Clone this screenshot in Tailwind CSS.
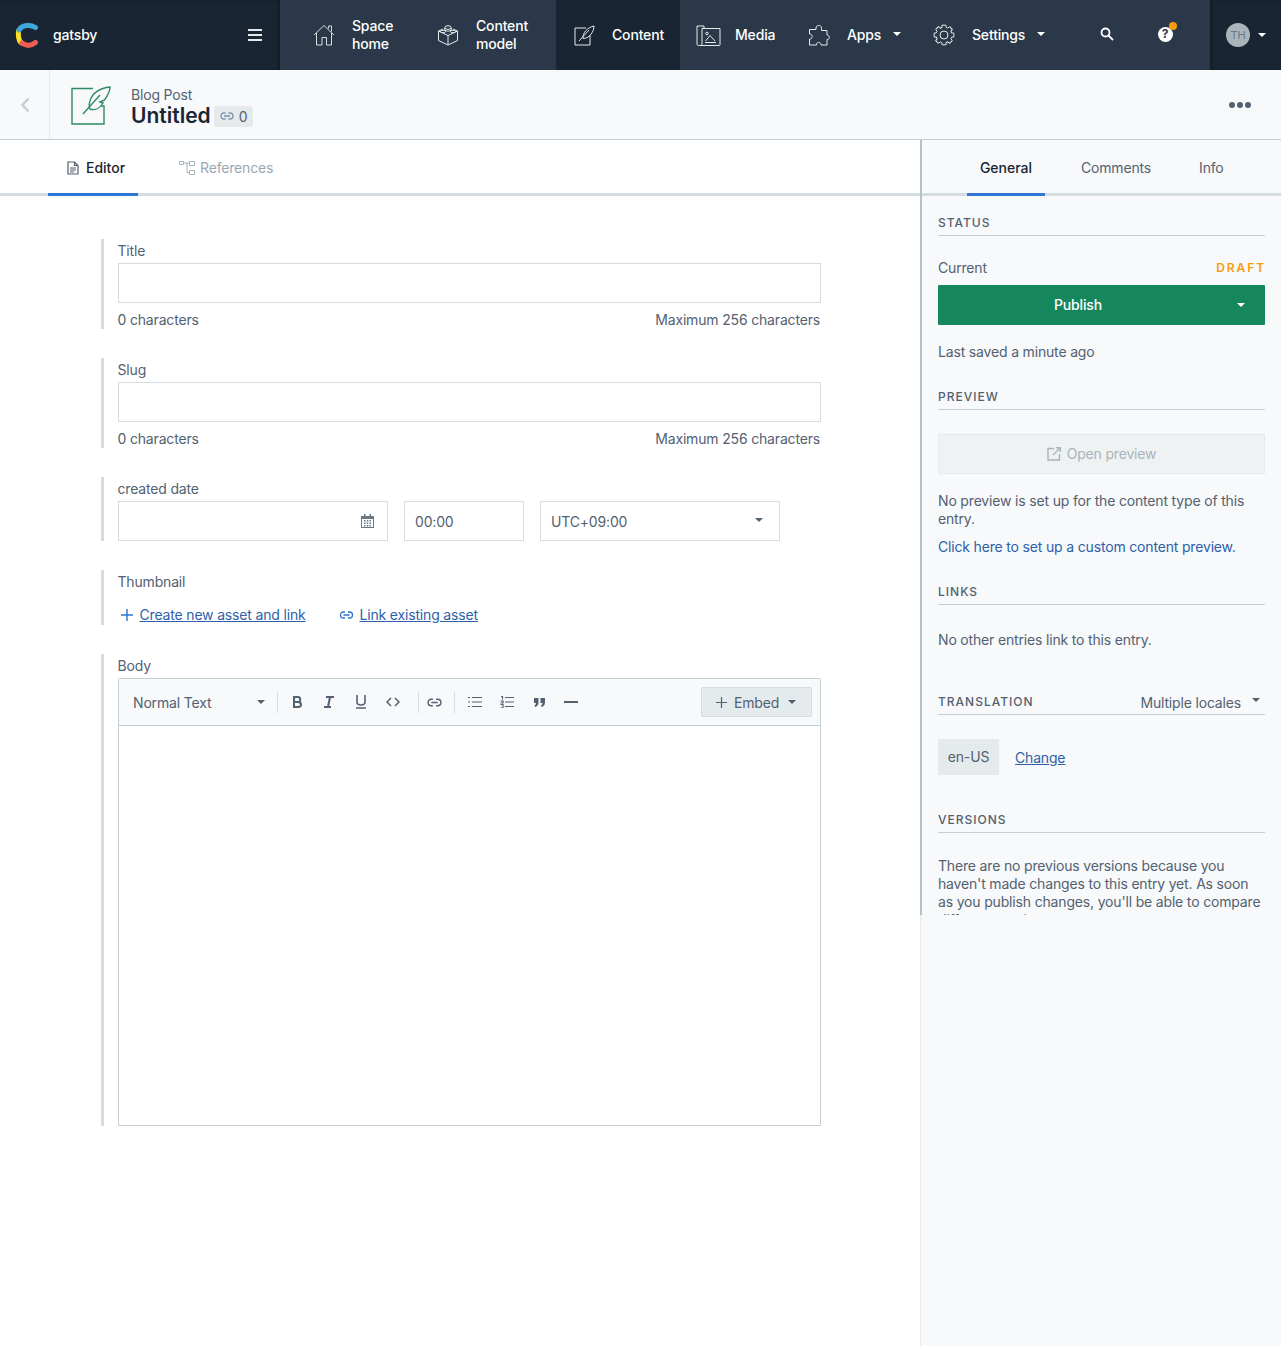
<!DOCTYPE html>
<html lang="en">
<head>
    <meta charset="UTF-8">
    <meta name="viewport" content="width=device-width, initial-scale=1.0">
    <title>Untitled - Blog Post</title>
    <script src="https://cdn.jsdelivr.net/npm/@tailwindcss/browser@4"></script>
</head>
<body class="bg-white font-['Inter','Liberation_Sans',sans-serif] text-[14px] tracking-[-0.17px] text-[#536171] h-[1346px] overflow-hidden">
    <!-- top nav -->
    <nav class="flex h-[70px] bg-[#2a3849] text-white font-medium">
        <div class="w-[280px] bg-[#192532] flex items-center pl-[15px] pr-[18px] shadow-[inset_-2px_0_3px_rgba(0,0,0,0.25)]">
            <svg class="w-[24px] h-[26px]" viewBox="0 0 24 26" fill="none" stroke-width="5" stroke-linecap="round">
                <path d="M3.500 9 C 3 15 4 20 7.500 21.500" stroke="#fbe122"/>
                <path d="M7 21 C 11 24 16 24 20.500 20.500" stroke="#ee5c52"/>
                <path d="M4 8 C 7 3 15 2 20.500 5.500" stroke="#3fa7dd"/>
            </svg>
            <span class="ml-[14px] mt-[-2px]">gatsby</span>
            <svg class="ml-auto w-[14px] h-[12px] mt-[-1px]" viewBox="0 0 14 12" fill="#e5ebed"><rect y="0" width="14" height="2"/><rect y="5" width="14" height="2"/><rect y="10" width="14" height="2"/></svg>
        </div>

        <div class="flex items-center w-[136px] pl-[33px]">
            <svg class="w-[22px] h-[22px] shrink-0" viewBox="0 0 22 22" fill="none" stroke="#d3dce0" stroke-width="1"><path d="M1 11 L11 1.500 L21 11 M3.500 9 V21 H9 V13.500 H13.500 V21 H18.500 V9 M15.500 4.500 V2 H18.500 V7.500"/></svg>
            <span class="ml-[17px] leading-[18px]">Space<br>home</span>
        </div>
        <div class="flex items-center w-[140px] pl-[21px]">
            <svg class="w-[22px] h-[22px] shrink-0" viewBox="0 0 22 22" fill="none" stroke="#e5ebed" stroke-width="1"><path d="M1.500 7 L11 11.500 L20.500 7 V16.500 L11 21 L1.500 16.500 Z M11 11.500 V21 M1.500 7 L6 5 M20.500 7 L16 5"/><ellipse cx="11" cy="3.500" rx="3.200" ry="1.800"/><path d="M7.800 3.500 V6 C 8.500 7.500 13.500 7.500 14.200 6 V3.500"/><ellipse cx="6" cy="7.500" rx="2.500" ry="1.300"/><ellipse cx="16" cy="7.500" rx="2.500" ry="1.300"/></svg>
            <span class="ml-[17px] leading-[18px]">Content<br>model</span>
        </div>
        <div class="flex items-center w-[124px] pl-[18px] bg-[#192532]">
            <svg class="w-[21px] h-[21px] shrink-0" viewBox="0 0 21 21" fill="none" stroke="#e5ebed" stroke-width="1"><path d="M12 3 H1 V20 H16 V10"/><path d="M5 16 L15 5 M9 13.500 C 8.500 8 13 2.500 20 1 C 20 7 15 13.500 9 13.500 Z"/></svg>
            <span class="ml-[17px] mt-[-2px]">Content</span>
        </div>
        <div class="flex items-center w-[112px] pl-[16px]">
            <svg class="w-[25px] h-[21px] shrink-0" viewBox="0 0 25 21" fill="none" stroke="#e5ebed" stroke-width="1"><path d="M8 3.500 V1 H1 V19 C 1 20 1.500 20.500 2.500 20.500 H23 C 23.800 20.500 24 20 24 19.500 V3.500 H6 V19 C 6 20 5 20.500 3.500 20.500"/><circle cx="11" cy="8.500" r="1.300"/><path d="M9.500 16 L14 10.500 L19 16 M9 17.500 H20"/></svg>
            <span class="ml-[14px] mt-[-2px]">Media</span>
        </div>
        <div class="flex items-center w-[141px] pl-[16px]">
            <svg class="w-[22px] h-[22px] shrink-0" viewBox="0 0 22 22" fill="none" stroke="#e5ebed" stroke-width="1"><path d="M8 4 C 8 0.500 14 0.500 13.500 4.500 V6.500 H19 V11 C 22 10.500 22 16 19 15.500 V21 H13 C 13.500 17.500 8 17.500 8.500 21 H1.500 V15 C 5 15.500 5 9.500 1.500 10 V5.500 H8 Z"/></svg>
            <span class="ml-[17px] mt-[-2px]">Apps</span>
            <span class="ml-[12px] mt-[-2px] border-x-[4px] border-x-transparent border-t-[4px] border-t-white"></span>
        </div>
        <div class="flex items-center w-[137px]">
            <svg class="w-[22px] h-[22px] shrink-0" viewBox="0 0 22 22" fill="none" stroke="#e5ebed" stroke-width="1">
                <circle cx="11" cy="11" r="4"/>
                <path id="gear-tooth" d="M9.090 1.180 L12.910 1.180 L13.280 3.540 L14.660 4.110 L16.590 2.710"/>
                <use href="#gear-tooth" transform="rotate(45 11 11)"/>
                <use href="#gear-tooth" transform="rotate(90 11 11)"/>
                <use href="#gear-tooth" transform="rotate(135 11 11)"/>
                <use href="#gear-tooth" transform="rotate(180 11 11)"/>
                <use href="#gear-tooth" transform="rotate(225 11 11)"/>
                <use href="#gear-tooth" transform="rotate(270 11 11)"/>
                <use href="#gear-tooth" transform="rotate(315 11 11)"/>
            </svg>
            <span class="ml-[17px] mt-[-2px]">Settings</span>
            <span class="ml-[12px] mt-[-2px] border-x-[4px] border-x-transparent border-t-[4px] border-t-white"></span>
        </div>
        <div class="flex items-center w-[74px] justify-center mt-[-3px]">
            <svg class="w-[14px] h-[14px]" viewBox="0 0 14 14" fill="none" stroke="#fff" stroke-width="1.800"><circle cx="5.500" cy="5.500" r="4"/><path d="M8.500 8.500 L13 13"/></svg>
        </div>
        <div class="flex items-center justify-center w-[42px] relative mt-[-2px]">
            <span class="flex items-center justify-center w-[15px] h-[15px] rounded-full bg-white text-[#2a3849] text-[12px] font-bold leading-none">?</span>
            <span class="absolute top-[24px] left-[25px] w-[8px] h-[8px] rounded-full bg-[#f79b0c]"></span>
        </div>
        <div class="ml-auto w-[71px] bg-[#192532] flex items-center pl-[16px] shadow-[inset_2px_0_3px_rgba(0,0,0,0.25)]">
            <span class="flex items-center justify-center w-[24px] h-[24px] rounded-full bg-[#a9b4bb] text-[#6b7785] text-[11px] font-normal">TH</span>
            <span class="ml-[8px] border-x-[4px] border-x-transparent border-t-[4px] border-t-white"></span>
        </div>
    </nav>

    <!-- entry header -->
    <header class="flex h-[70px] bg-[#f7f9fa] border-b border-[#c3cfd5]">
        <div class="w-[50px] flex items-center justify-center border-r border-[#e5ebed]">
            <svg class="w-[10px] h-[16px]" viewBox="0 0 10 16" fill="none" stroke="#c3cfd5" stroke-width="2.500"><path d="M8.500 1.500 L2.500 8 L8.500 14.500"/></svg>
        </div>
        <svg class="ml-[20px] mt-[14px] w-[41px] h-[42px]" viewBox="0 0 41 42" fill="none" stroke="#2e8b62" stroke-width="1.400"><path d="M23 4.500 H2 V40 H34 V22 H31"/><path d="M40 3 C 30 4 22 9 20 17 C 19 20 19 23 20 25 C 25 27 30 24 33 19 L30 18 L34.500 16 C 38 11 40 7 40 3 Z" fill="#f7f9fa"/><path d="M13 30 L30 11"/></svg>
        <div class="ml-[20px] pt-[17px]">
            <div class="leading-[16px]">Blog Post</div>
            <div class="flex items-center">
                <span class="text-[#192532] text-[21px] font-semibold leading-[26px] tracking-[0]">Untitled</span>
                <span class="ml-[3px] flex items-center h-[21px] w-[39px] pl-[6px] gap-[5px] rounded-[3px] bg-[#e5ebed]">
                    <svg class="w-[14px] h-[8px]" viewBox="0 0 14 8" fill="none" stroke="#8091a5" stroke-width="1.300"><path d="M5.500 1 H4 C 0 1 0 7 4 7 H5.500 M8.500 1 H10 C 14 1 14 7 10 7 H8.500 M4 4 H10"/></svg>0
                </span>
            </div>
        </div>
        <div class="ml-auto mr-[30px] flex items-center gap-[2px]">
            <span class="w-[6px] h-[6px] rounded-full bg-[#536171]"></span>
            <span class="w-[6px] h-[6px] rounded-full bg-[#536171]"></span>
            <span class="w-[6px] h-[6px] rounded-full bg-[#536171]"></span>
        </div>
    </header>

    <div class="flex">
        <!-- editor column -->
        <main class="w-[920px] shrink-0">
            <div class="relative flex h-[56px] pl-[48px] border-b-[3px] border-[#d3dce0]">
                <div class="w-[90px] h-[56px] border-b-[3px] border-[#2e75d4] flex items-center pl-[19px] pt-[2px] gap-[7px] text-[#192532] font-medium tracking-[0]">
                    <svg class="w-[12px] h-[14px]" viewBox="0 0 12 14" fill="none" stroke="#536171" stroke-width="1.200"><path d="M1 1 H7.500 L11 4.500 V13 H1 Z M7.500 1 V4.500 H11 M3 7 H9 M3 9 H9 M3 11 H7"/></svg>
                    Editor
                </div>
                <div class="ml-[41px] flex items-center gap-[5px] pt-[2px] text-[#9ba8b3] h-[53px]">
                    <svg class="w-[16px] h-[14px]" viewBox="0 0 16 14" fill="none" stroke="#a9b4bb" stroke-width="1"><path d="M.5.500 H4.500 V3.500 H.5 Z M10.500.500 H15.500 V4.500 H10.500 Z M10.500 9.500 H15.500 V13.500 H10.500 Z M4.500 2 H10.500 M8 2 V11.500 H10.500"/></svg>
                    References
                </div>
            </div>

            <div class="pl-[101px] pt-[43px]">
                <section class="border-l-[3px] border-[#d3dce0] pl-[14px] w-[720px] h-[90px]">
                    <label class="block leading-[17px] pt-[3px] ml-[-0.5px]">Title</label>
                    <div class="mt-[4px] h-[40px] border border-[#d3dce0] bg-white"></div>
                    <div class="mt-[8px] ml-[-0.5px] pr-[1px] flex justify-between leading-[18px]"><span>0 characters</span><span>Maximum 256 characters</span></div>
                </section>
                <section class="mt-[29px] border-l-[3px] border-[#d3dce0] pl-[14px] w-[720px] h-[90px]">
                    <label class="block leading-[17px] pt-[3px] ml-[-0.5px]">Slug</label>
                    <div class="mt-[4px] h-[40px] border border-[#d3dce0] bg-white"></div>
                    <div class="mt-[8px] ml-[-0.5px] pr-[1px] flex justify-between leading-[18px]"><span>0 characters</span><span>Maximum 256 characters</span></div>
                </section>
                <section class="mt-[29px] border-l-[3px] border-[#d3dce0] pl-[14px] w-[720px] h-[64px]">
                    <label class="block leading-[17px] pt-[3px] ml-[-0.5px]">created date</label>
                    <div class="mt-[4px] flex gap-[16px]">
                        <div class="w-[270px] h-[40px] border border-[#d3dce0] flex items-center justify-end pr-[13px]">
                            <svg class="w-[13px] h-[14px]" viewBox="0 0 13 14" fill="#6b7785"><path d="M0 2 H3 V0 H4.500 V2 H8.500 V0 H10 V2 H13 V14 H0 Z M1 5 V13 H12 V5 Z"/><path d="M3 6 H4.500 V7.500 H3 Z M5.800 6 H7.300 V7.500 H5.800 Z M8.500 6 H10 V7.500 H8.500 Z M3 8.500 H4.500 V10 H3 Z M5.800 8.500 H7.300 V10 H5.800 Z M8.500 8.500 H10 V10 H8.500 Z M3 11 H4.500 V12.500 H3 Z M5.800 11 H7.300 V12.500 H5.800 Z M8.500 11 H10 V12.500 H8.500 Z"/></svg>
                        </div>
                        <div class="w-[120px] h-[40px] border border-[#d3dce0] flex items-center pl-[10px]">00:00</div>
                        <div class="w-[240px] h-[40px] border border-[#d3dce0] flex items-center justify-between pl-[10px] pr-[16px]">UTC+09:00<span class="mt-[-3px] border-x-[4px] border-x-transparent border-t-[4px] border-t-[#536171]"></span></div>
                    </div>
                </section>
                <section class="mt-[29px] border-l-[3px] border-[#d3dce0] pl-[14px] w-[720px] h-[55px]">
                    <label class="block leading-[17px] pt-[3px] ml-[-0.5px]">Thumbnail</label>
                    <div class="mt-[16px] flex items-center text-[#2e5fa8] leading-[18px]">
                        <svg class="ml-[3px] w-[12px] h-[12px]" viewBox="0 0 12 12" fill="none" stroke="#2e75d4" stroke-width="1.400"><path d="M6 0 V12 M0 6 H12"/></svg>
                        <a class="ml-[6.500px] underline">Create new asset and link</a>
                        <svg class="ml-[33px] w-[15px] h-[8px]" viewBox="0 0 14 8" fill="none" stroke="#2e75d4" stroke-width="1.300"><path d="M5.500 1 H4 C 0 1 0 7 4 7 H5.500 M8.500 1 H10 C 14 1 14 7 10 7 H8.500 M4 4 H10"/></svg>
                        <a class="ml-[6px] underline">Link existing asset</a>
                    </div>
                </section>
                <section class="mt-[29px] border-l-[3px] border-[#d3dce0] pl-[14px] w-[720px] h-[472px]">
                    <label class="block leading-[17px] pt-[3px] ml-[-0.5px]">Body</label>
                    <div class="mt-[4px] h-[448px] border border-[#c3cfd5] rounded-t-[2px]">
                        <div class="h-[47px] bg-[#f7f9fa] border-b border-[#c3cfd5] flex items-center pl-[14px] pr-[8px]">
                            <span class="w-[132px] shrink-0 flex items-center justify-between">Normal Text<span class="border-x-[4px] border-x-transparent border-t-[4px] border-t-[#536171]"></span></span>
                            <span class="ml-[12px] w-px h-[21px] bg-[#d3dce0]"></span>
                            <svg class="ml-[14px] w-[10px] h-[12px]" viewBox="0 0 10 12" fill="none" stroke="#536171" stroke-width="2"><path d="M1.500 1 H6 C 9 1 9 6 6 6 H1.500 M6 6 C 10 6 10 11 6 11 H1.500 M2 0 V12"/></svg>
                            <svg class="ml-[21px] w-[12px] h-[12px]" viewBox="0 0 12 12" fill="none" stroke="#536171" stroke-width="2"><path d="M3 1 H11 M1 11 H8 M7 1 L5 11"/></svg>
                            <svg class="ml-[20px] w-[12px] h-[14px]" viewBox="0 0 12 14" fill="none" stroke="#536171" stroke-width="1.600"><path d="M2 0 V7 C 2 11 10 11 10 7 V0 M1 13 H11"/></svg>
                            <svg class="ml-[19px] w-[14px] h-[10px]" viewBox="0 0 14 10" fill="none" stroke="#536171" stroke-width="1.500"><path d="M5 1 L1 5 L5 9 M9 1 L13 5 L9 9"/></svg>
                            <span class="ml-[18px] w-px h-[21px] bg-[#d3dce0]"></span>
                            <svg class="ml-[8px] w-[15px] h-[9px]" viewBox="0 0 14 8" fill="none" stroke="#536171" stroke-width="1.300"><path d="M5.500 1 H4 C 0 1 0 7 4 7 H5.500 M8.500 1 H10 C 14 1 14 7 10 7 H8.500 M4 4 H10"/></svg>
                            <span class="ml-[12px] w-px h-[21px] bg-[#d3dce0]"></span>
                            <svg class="ml-[13px] w-[14px] h-[12px]" viewBox="0 0 14 12" fill="none" stroke="#536171" stroke-width="1.200"><path d="M4 1.500 H14 M4 6 H14 M4 10.500 H14 M0 1.500 H2 M0 6 H2 M0 10.500 H2"/></svg>
                            <svg class="ml-[18px] w-[14px] h-[12px]" viewBox="0 0 14 12" fill="none" stroke="#536171" stroke-width="1.200"><path d="M5 1.500 H14 M5 6 H14 M5 10.500 H14 M1 .5 H2.500 V3.500 M.5 5 H3 V7 H.5 M.5 8.500 H3 V12 H.5"/></svg>
                            <svg class="ml-[20px] w-[11px] h-[9px]" viewBox="0 0 11 9" fill="#536171"><path d="M0 0 H4.500 V4.500 C 4.500 7 3 8.500 1 9 L.5 7.500 C 1.500 7 2 6 2 5 H0 Z M6.500 0 H11 V4.500 C 11 7 9.500 8.500 7.500 9 L7 7.500 C 8 7 8.500 6 8.500 5 H6.500 Z"/></svg>
                            <span class="ml-[19px] w-[14px] h-[1.500px] bg-[#536171]"></span>
                            <div class="ml-auto w-[111px] h-[30px] rounded-[2px] bg-[#e5ebed] border border-[#d3dce0] flex items-center pl-[14px]">
                                <svg class="w-[11px] h-[11px]" viewBox="0 0 11 11" fill="none" stroke="#536171" stroke-width="1.200"><path d="M5.500 0 V11 M0 5.500 H11"/></svg>
                                <span class="ml-[7px]">Embed</span>
                                <span class="ml-[9px] border-x-[4px] border-x-transparent border-t-[4px] border-t-[#536171]"></span>
                            </div>
                        </div>
                    </div>
                </section>
            </div>
        </main>

        <!-- sidebar -->
        <aside class="flex-1 bg-[#f7f9fa] h-[1206px] border-l border-[#e5ebed]">
            <div class="h-[775px] overflow-hidden border-l-2 border-[#b4c3ca] ml-[-1px]">
                <div class="flex h-[56px] border-b-[3px] border-[#d3dce0] pl-[45px]">
                    <div class="w-[78px] h-[56px] border-b-[3px] border-[#2e75d4] flex items-center justify-center pt-[2px] text-[#192532] font-medium tracking-[0]">General</div>
                    <div class="ml-[36px] h-[53px] flex items-center pt-[2px]">Comments</div>
                    <div class="ml-[48px] h-[53px] flex items-center pt-[2px]">Info</div>
                </div>
                <div class="pl-[16px] pr-[16px]">
                    <h2 class="mt-[18px] h-[22px] border-b border-[#c3cfd5] text-[12px] font-medium tracking-[1px] leading-[17px]">STATUS</h2>
                    <div class="mt-[23px] flex justify-between items-center leading-[18px]"><span>Current</span><span class="text-[#f79b0c] text-[12px] font-semibold tracking-[1.900px] mr-[-1px]">DRAFT</span></div>
                    <div class="relative mt-[8px] h-[40px] bg-[#16875d] rounded-[1px] flex items-center justify-center pr-[47px] pb-[1px] text-white font-medium">Publish
                        <span class="absolute right-[20px] top-[18px] border-x-[4px] border-x-transparent border-t-[4px] border-t-white"></span>
                    </div>
                    <p class="mt-[18px] leading-[18px]">Last saved a minute ago</p>
                    <h2 class="mt-[27px] h-[22px] border-b border-[#c3cfd5] text-[12px] font-medium tracking-[1px] leading-[17px]">PREVIEW</h2>
                    <div class="mt-[24px] h-[40px] bg-[#eff2f3] border border-[#e5ebed] rounded-[1px] flex items-center justify-center gap-[6px] pb-[1px] text-[#a9b4bb]">
                        <svg class="w-[14px] h-[14px]" viewBox="0 0 14 14" fill="none" stroke="#a9b4bb" stroke-width="1.400"><path d="M7 1.500 H1 V13 H12.500 V7 M6 8 L13 1 M9 .7 H13.300 V5"/></svg>
                        Open preview
                    </div>
                    <p class="mt-[18px] leading-[18px]">No preview is set up for the content type of this entry.</p>
                    <a class="block mt-[10px] leading-[18px] text-[#2e5fa8]">Click here to set up a custom content preview.</a>
                    <h2 class="mt-[27px] h-[22px] border-b border-[#c3cfd5] text-[12px] font-medium tracking-[1px] leading-[17px]">LINKS</h2>
                    <p class="mt-[26px] leading-[18px]">No other entries link to this entry.</p>
                    <div class="mt-[44px] h-[22px] border-b border-[#c3cfd5] flex justify-between">
                        <h2 class="text-[12px] font-medium tracking-[1px] leading-[17px]">TRANSLATION</h2>
                        <span class="flex items-center h-[18px]">Multiple locales<span class="ml-[11px] mr-[5px] mt-[-5px] border-x-[4px] border-x-transparent border-t-[4px] border-t-[#536171]"></span></span>
                    </div>
                    <div class="mt-[24px] flex items-center">
                        <span class="w-[61px] h-[36px] bg-[#e5ebed] flex items-center justify-center pb-[1px]">en-US</span>
                        <a class="ml-[16px] text-[#2e5fa8] underline">Change</a>
                    </div>
                    <h2 class="mt-[36px] h-[22px] border-b border-[#c3cfd5] text-[12px] font-medium tracking-[1px] leading-[17px]">VERSIONS</h2>
                    <p class="mt-[24px] leading-[18px]">There are no previous versions because you haven't made changes to this entry yet. As soon as you publish changes, you'll be able to compare different versions.</p>
                </div>
            </div>
        </aside>
    </div>
</body>
</html>
